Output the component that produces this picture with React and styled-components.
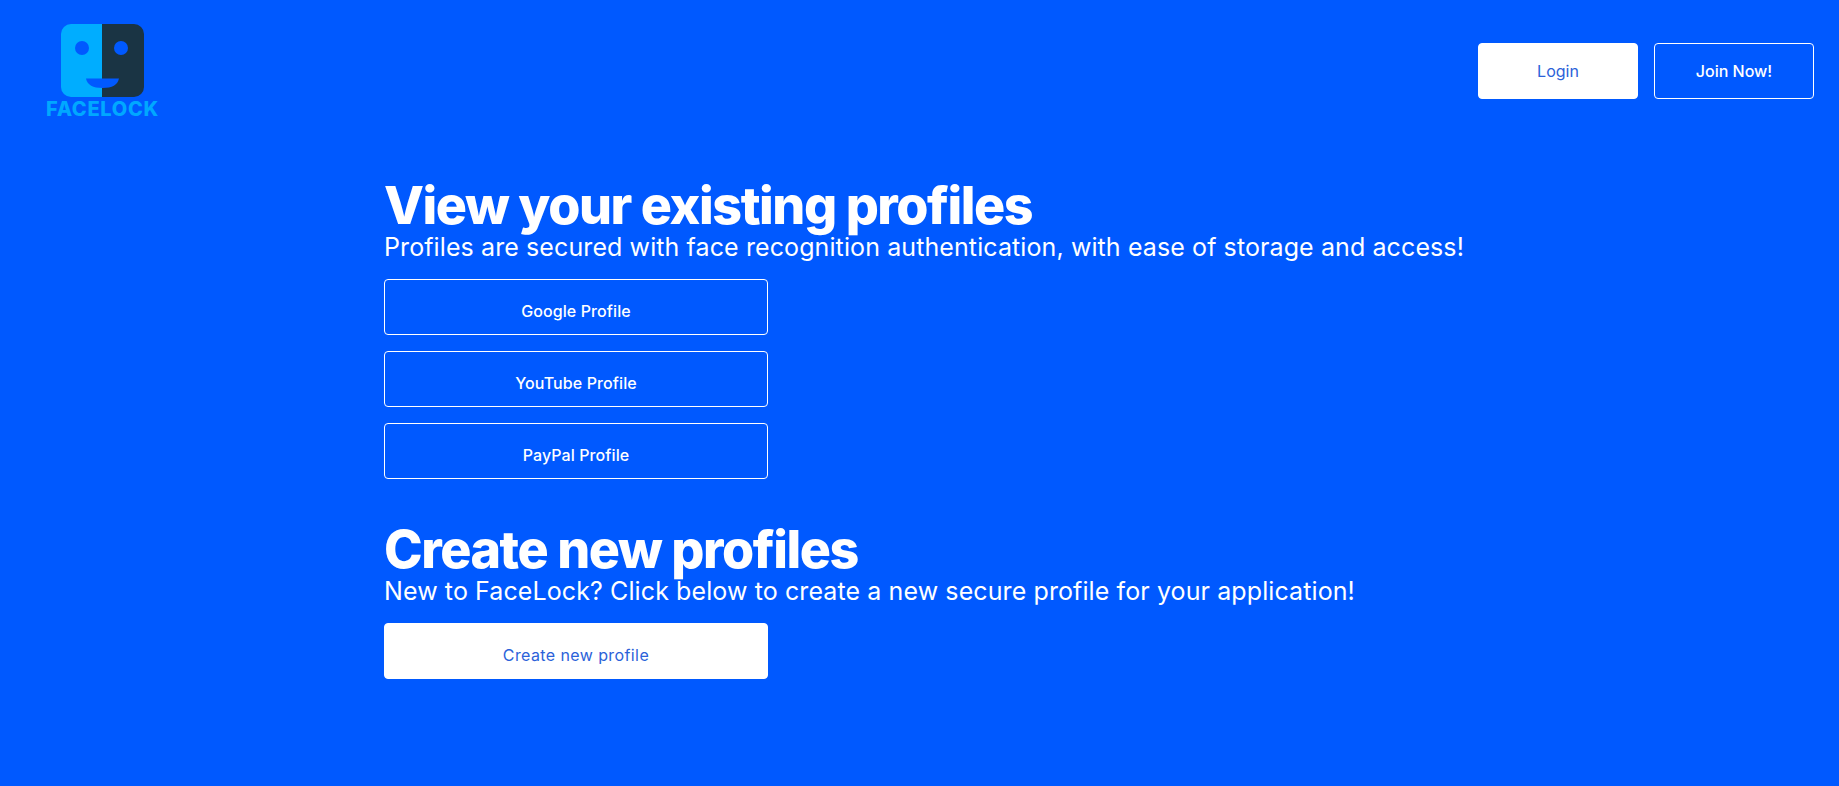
import React from "react";
import styled, { createGlobalStyle } from "styled-components";

const GlobalStyle = createGlobalStyle`
* {
  padding: 0;
  margin: 0;
  box-sizing: border-box;
}

body {
  background: #0059ff;
  color: #ffffff;
  font-family: "Inter", "Liberation Sans", sans-serif;
}
`;

const Page = styled.div`
  width: 100%;
  min-height: 100vh;
  overflow: hidden;
`;

const Header = styled.header`
  display: flex;
  justify-content: space-between;
  align-items: flex-start;
  padding: 24px 25px 0 47px;
  height: 178px;
`;

const Brand = styled.div`
  display: flex;
  flex-direction: column;
  align-items: center;
  width: 111px;
  gap: 2px;
`;

const BrandName = styled.span`
  font-size: 20px;
  line-height: 20px;
  font-weight: 800;
  color: #00a8ff;
  letter-spacing: 0.7px;
`;

const Nav = styled.nav`
  display: flex;
  gap: 16px;
  padding-top: 19px;
`;

const Button = styled.button`
  display: flex;
  align-items: center;
  justify-content: center;
  width: 160px;
  height: 56px;
  border-radius: 4px;
  border: 1px solid #ffffff;
  background: ${(p) => (p.$solid ? "#ffffff" : "transparent")};
  color: ${(p) => (p.$solid ? "#2b62d9" : "#ffffff")};
  font-family: inherit;
  font-size: 16px;
  font-weight: ${(p) => (p.$solid ? 400 : 500)};
`;

const ProfileButton = styled(Button)`
  width: 384px;
  padding-top: 8px;
  letter-spacing: ${(p) => (p.$solid ? 0.4 : 0.1)}px;
`;

const Main = styled.main`
  display: flex;
  flex-direction: column;
  padding-left: 384px;
`;

const Section = styled.section`
  display: flex;
  flex-direction: column;
  margin-bottom: ${(p) => p.$gap}px;
`;

const Title = styled.h1`
  font-size: 52px;
  line-height: 55px;
  font-weight: 800;
  letter-spacing: -1.45px;
`;

const Subtitle = styled.p`
  font-size: 25px;
  line-height: 28px;
  font-weight: 400;
  letter-spacing: 0.1px;
  margin-bottom: 18px;
`;

const ButtonList = styled.div`
  display: flex;
  flex-direction: column;
  gap: 16px;
`;

const Logo = () => (
  <svg width="83" height="73" viewBox="0 0 83 73">
    <path d="M42 0H10A10 10 0 0 0 0 10V63A10 10 0 0 0 10 73H42Z" fill="#00adff" />
    <path d="M41 0H73A10 10 0 0 1 83 10V63A10 10 0 0 1 73 73H41Z" fill="#1a3444" />
    <circle cx="21" cy="24" r="7" fill="#0059ff" />
    <circle cx="60" cy="24" r="7" fill="#0059ff" />
    <path d="M25 54.500H58Q56 64 41.500 64Q27 64 25 54.500Z" fill="#0059ff" />
  </svg>
);

const profiles = ["Google Profile", "YouTube Profile", "PayPal Profile"];

const App = () => {
  return (
    <>
      <GlobalStyle />
      <Page>
        <Header>
          <Brand>
            <Logo />
            <BrandName>FACELOCK</BrandName>
          </Brand>
          <Nav>
            <Button $solid>Login</Button>
            <Button>Join Now!</Button>
          </Nav>
        </Header>
        <Main>
          <Section $gap={43}>
            <Title>View your existing profiles</Title>
            <Subtitle>Profiles are secured with face recognition authentication, with ease of storage and access!</Subtitle>
            <ButtonList>
              {profiles.map((name) => (
                <ProfileButton key={name}>{name}</ProfileButton>
              ))}
            </ButtonList>
          </Section>
          <Section $gap={0}>
            <Title>Create new profiles</Title>
            <Subtitle>New to FaceLock? Click below to create a new secure profile for your application!</Subtitle>
            <ButtonList>
              <ProfileButton $solid>Create new profile</ProfileButton>
            </ButtonList>
          </Section>
        </Main>
      </Page>
    </>
  );
};

export default App;
